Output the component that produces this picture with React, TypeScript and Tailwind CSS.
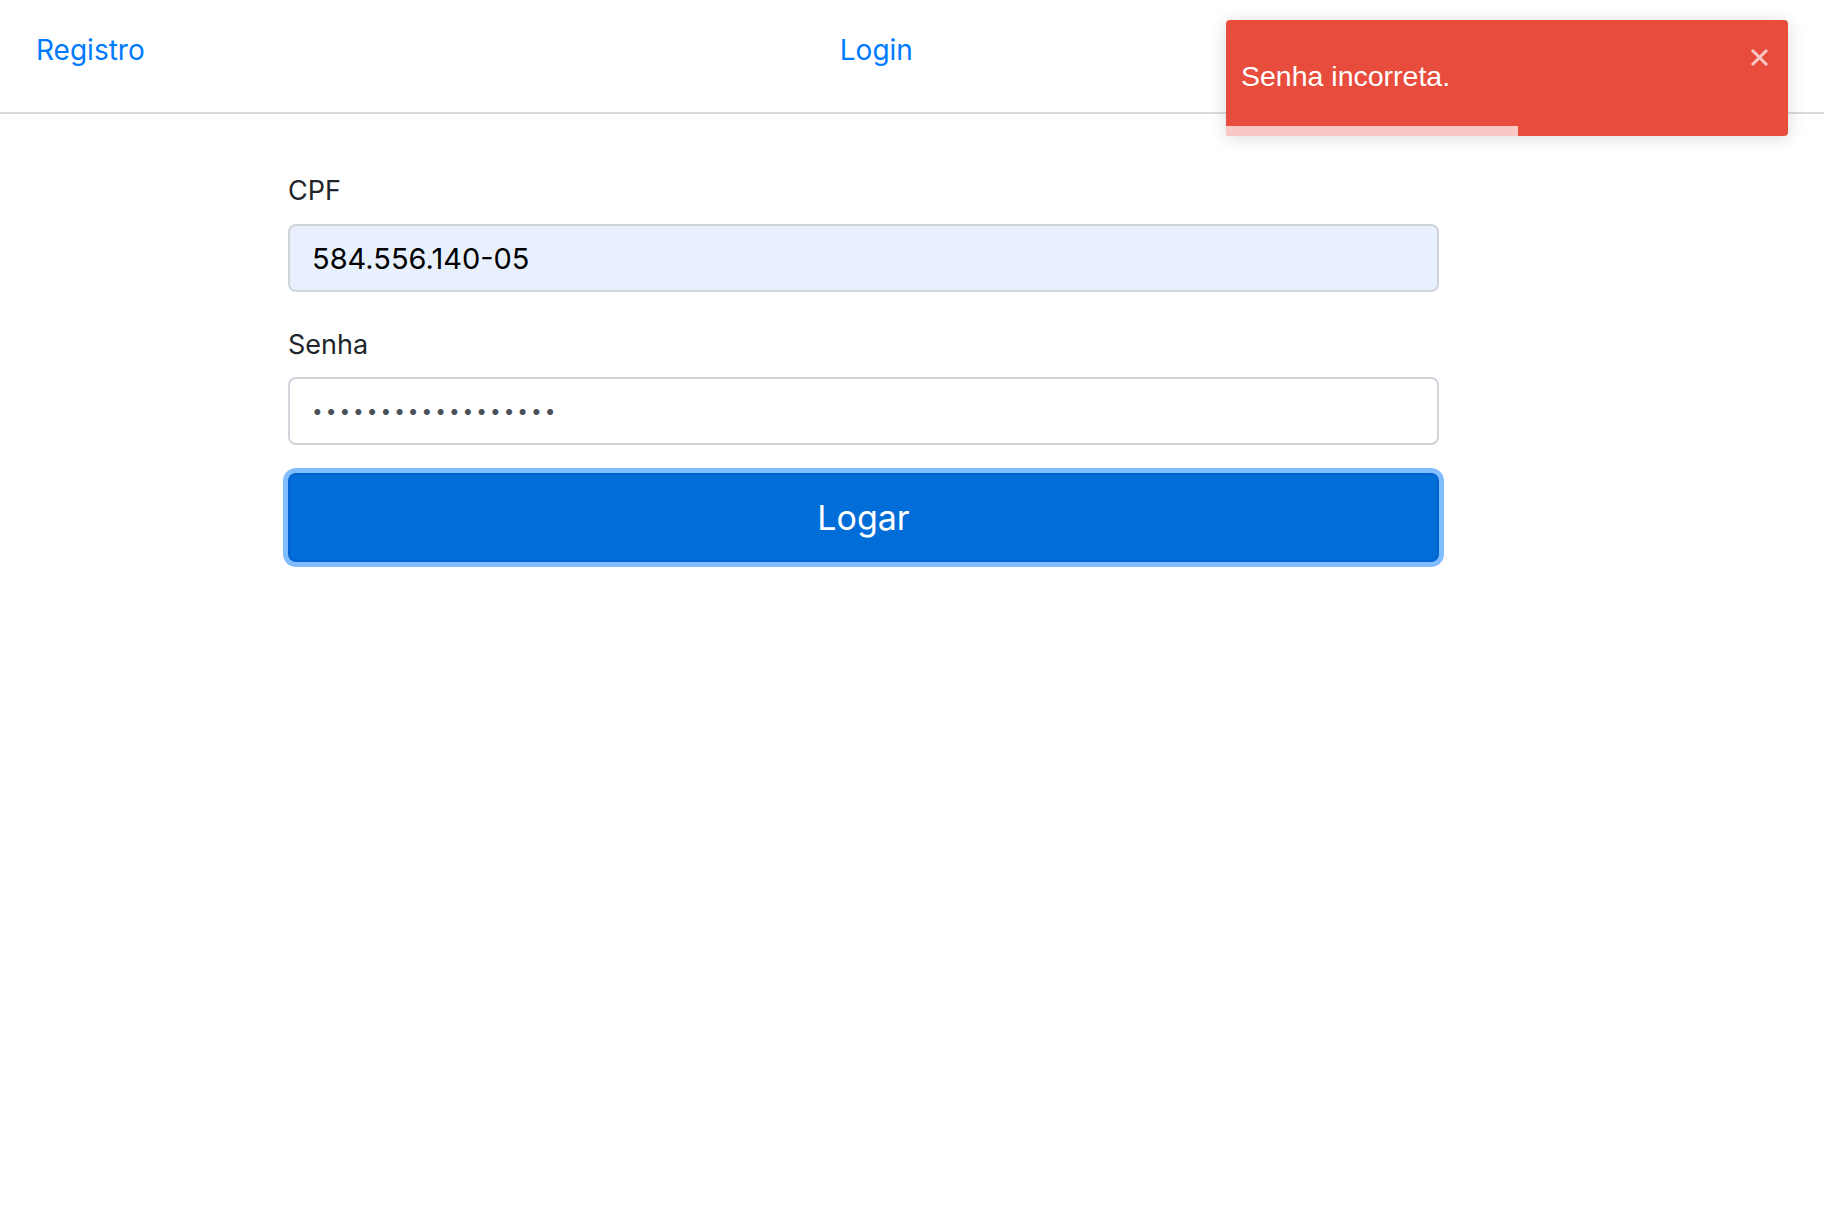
import React from "react";

export default function App() {
  return (
    <div className="relative min-h-[1212px] w-full bg-white font-['Inter',sans-serif]">
      <nav className="flex h-[114px] items-center justify-between border-b-2 border-[#dadada] px-9 pb-[12px]">
        <a href="#" className="text-[28px] text-[#007bff]">
          Registro
        </a>
        <a href="#" className="text-[28px] text-[#007bff]">
          Login
        </a>
        <span className="w-[180px]" />
      </nav>

      <form className="ml-[288px] mt-[59px] flex w-[1151px] flex-col">
        <label className="mb-[15px] h-[36px] text-[27px] leading-[36px] text-[#212529]">CPF</label>
        <input
          readOnly
          value="584.556.140-05"
          className="h-[68px] rounded-[8px] border-2 border-[#ced4da] bg-[#e8f0fe] px-[22px] text-[29px] text-black outline-none"
        />
        <label className="mb-[14px] mt-[35px] h-[36px] text-[27px] leading-[36px] text-[#212529]">Senha</label>
        <input
          readOnly
          type="password"
          value="abcdefghijklmnopqr"
          className="h-[68px] rounded-[8px] border-2 border-[#ced4da] bg-white px-[22px] text-[19px] tracking-[3px] text-[#495057] outline-none"
        />
        <button
          type="button"
          className="mt-[28px] h-[89px] rounded-[8px] border-2 border-[#0062cc] bg-[#006dd8] text-[34px] text-white shadow-[0_0_0_5px_#80bdff]"
        >
          Logar
        </button>
      </form>

      <div className="absolute right-[36px] top-[20px] flex h-[116px] w-[562px] flex-col overflow-hidden rounded-[4px] bg-[#e74c3c] shadow-[0_2px_18px_rgba(0,0,0,0.15)]">
        <div className="relative flex flex-1 items-center pl-[15px] pt-[6px] font-['Liberation_Sans',sans-serif] text-[28.5px] text-white">
          Senha incorreta.
          <svg
            className="absolute right-[19px] top-[28px]"
            width="19"
            height="19"
            viewBox="0 0 19 19"
            fill="none"
            stroke="#f8c9c4"
            strokeWidth="3"
          >
            <path d="M2 2 L17 17 M17 2 L2 17" />
          </svg>
        </div>
        <div className="h-[10px] w-[292px] bg-[#f8c9c4]" />
      </div>
    </div>
  );
}
